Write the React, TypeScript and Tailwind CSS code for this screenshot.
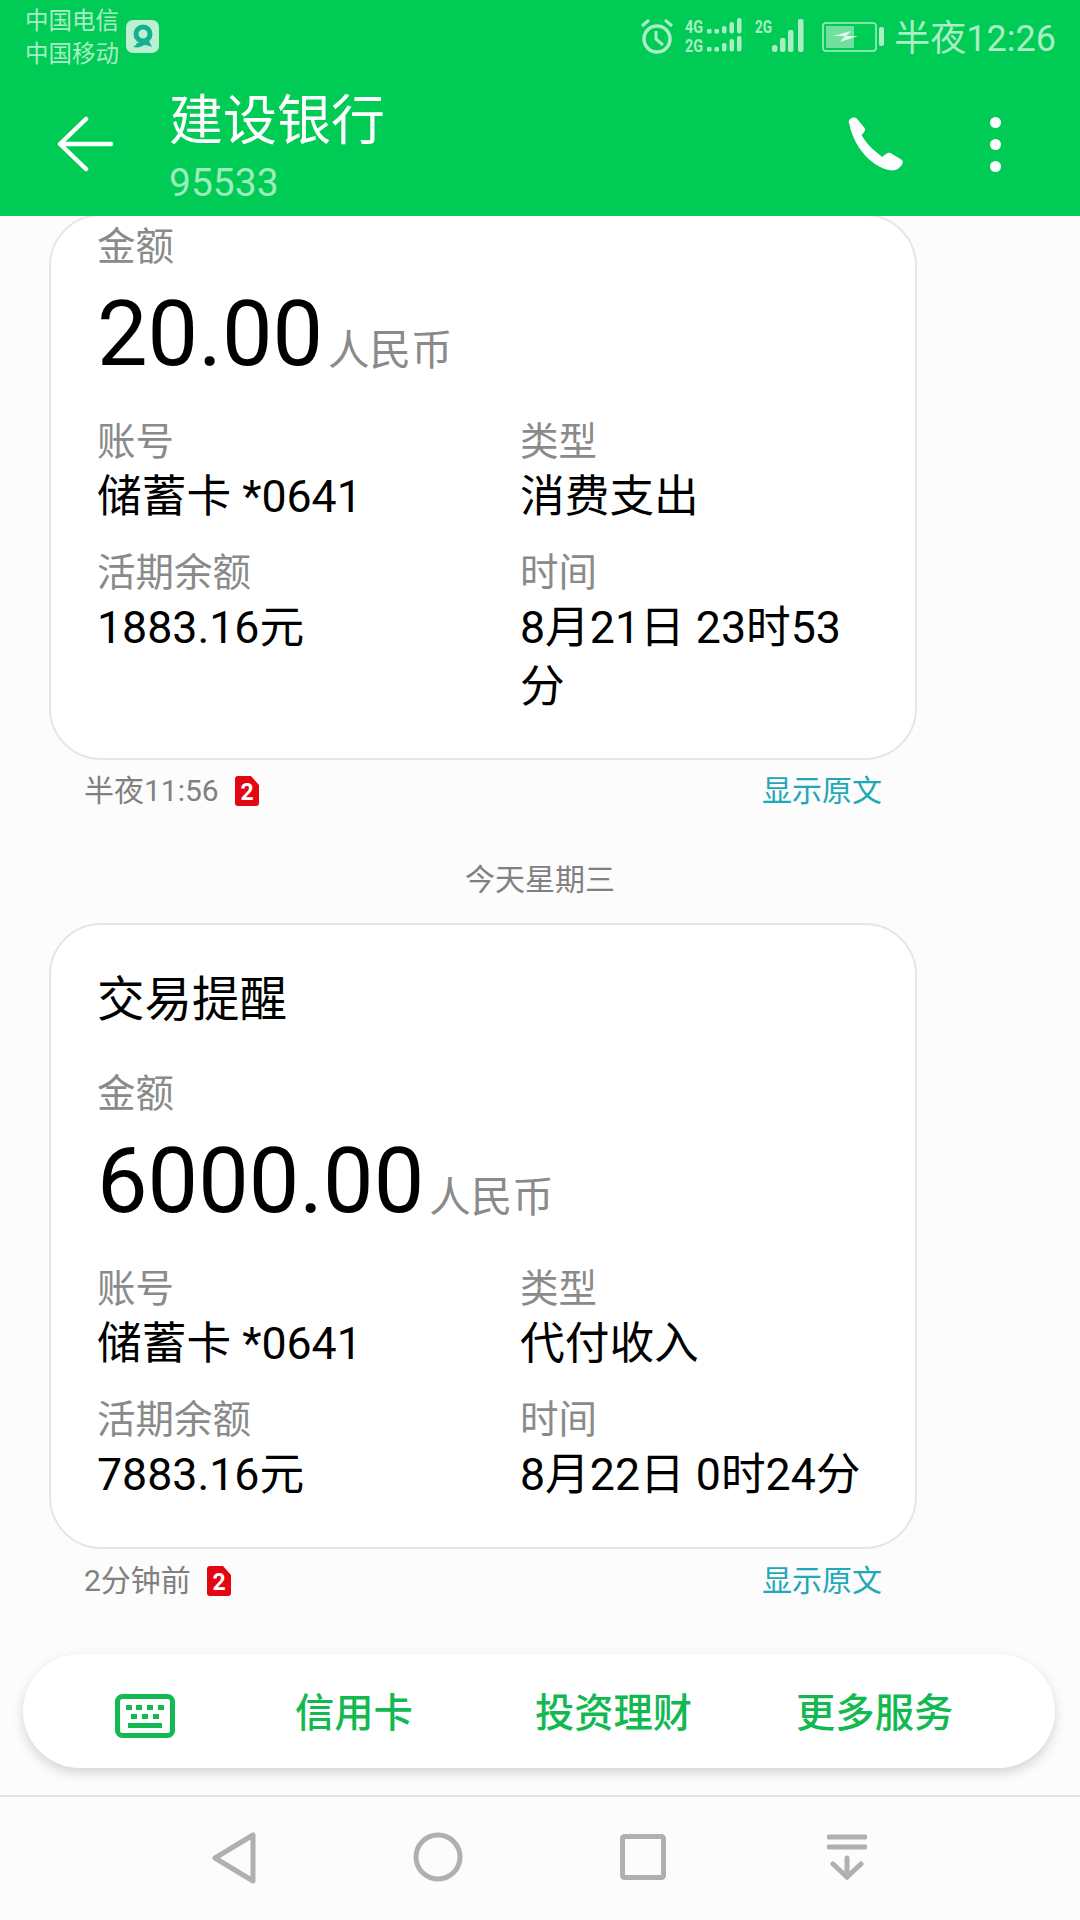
import React from 'react';

const cjk = "font-['Roboto','Noto_Sans_CJK_SC',sans-serif]";

interface Tx {
  title?: string;
  amount: string;
  kind: string;
  balance: string;
  time: string;
}

const StatusIcons = () => (
  <svg width="244" height="40" viewBox="0 0 244 40" fill="#a9eec5">
    <circle cx="16" cy="21" r="13" fill="none" stroke="#a9eec5" strokeWidth="3.5" />
    <path d="M15 13v8l7 6" fill="none" stroke="#a9eec5" strokeWidth="3" />
    <path d="M1 8l7-6M31 8l-7-6" fill="none" stroke="#a9eec5" strokeWidth="3" />
    <text x="44" y="15" fontSize="19" fontWeight="700" fontFamily="Roboto" textLength="18" lengthAdjust="spacingAndGlyphs">4G</text>
    <text x="44" y="34" fontSize="19" fontWeight="700" fontFamily="Roboto" textLength="18" lengthAdjust="spacingAndGlyphs">2G</text>
    <rect x="66" y="11" width="4.5" height="4.5" rx="1" />
    <rect x="73.5" y="11" width="4.5" height="4.5" rx="1" />
    <rect x="81" y="8" width="4.5" height="7.5" rx="2" />
    <rect x="88.5" y="4" width="4.5" height="11.5" rx="2" />
    <rect x="96" y="0" width="4.5" height="15.5" rx="2" />
    <rect x="66" y="29" width="4.5" height="4.5" rx="1" />
    <rect x="73.5" y="29" width="4.5" height="4.5" rx="1" />
    <rect x="81" y="25" width="4.5" height="8.5" rx="2" />
    <rect x="88.5" y="21" width="4.5" height="12.5" rx="2" />
    <rect x="96" y="18" width="4.5" height="15.5" rx="2" />
    <text x="114" y="15" fontSize="19" fontWeight="700" fontFamily="Roboto" textLength="17" lengthAdjust="spacingAndGlyphs">2G</text>
    <rect x="131" y="27" width="5.5" height="7" rx="2.5" />
    <rect x="139" y="20" width="5.5" height="14" rx="2" />
    <rect x="147" y="12" width="5.5" height="22" rx="2" />
    <rect x="157" y="1" width="5.5" height="33" rx="2" />
    <rect x="182" y="5" width="53" height="28" rx="3" fill="none" stroke="#a9eec5" strokeWidth="1.5" />
    <rect x="185" y="8" width="28" height="22" fill="#6fe09e" />
    <path d="M192 18l18-5-5 5h12l-18 6 5-6z" fill="#e2f9ea" />
    <rect x="238" y="9" width="5" height="19" rx="2" />
  </svg>
);

const Header = () => (
  <header className="h-[216px] shrink-0 bg-[#00cb55] relative flex flex-col">
    <div className="h-[70px] flex pl-[25px] pt-[5px]">
      <div className="text-[23.5px] leading-[33px] text-[#a9eec5] w-[101px]">
        <div>中国电信</div>
        <div>中国移动</div>
      </div>
      <div className="mt-[15px] w-[33px] h-[33px] rounded-[7px] bg-[#bdf0d3] flex items-center justify-center">
        <svg width="27" height="27" viewBox="0 0 27 27" fill="none">
          <circle cx="14" cy="11" r="7" stroke="#0fb38f" strokeWidth="5" />
          <path d="M8 20c-1 2-2 3-4 4 5 1 8 0 11-2 3 0 6 1 8 2l-3-6z" fill="#0fb38f" />
        </svg>
      </div>
      <div className="ml-auto flex items-start pr-[24px] pt-[13px]">
        <StatusIcons />
        <span className="ml-[9px] text-[36px] leading-[40px] text-[#a9eec5] mt-[1px]">半夜12:26</span>
      </div>
    </div>
    <div className="flex flex-1 items-start">
      <svg className="ml-[56px] mt-[46px]" width="58" height="56" viewBox="0 0 58 56" fill="none" stroke="#fff" strokeWidth="4.5" strokeLinecap="round" strokeLinejoin="round">
        <path d="M4 28h51M30 3L4 28l26 25" />
      </svg>
      <div className="ml-[55px] mt-[20px]">
        <div className="text-[54px] leading-[64px] text-white">建设银行</div>
        <div className="text-[39px] leading-[44px] text-[#9bedbd] mt-[7px]">95533</div>
      </div>
      <svg className="ml-auto mt-[47px]" width="56" height="54" viewBox="0 0 54 54" fill="#fff" preserveAspectRatio="none">
        <path d="M2 6C0 3 6-1 9 1l8 10c1 2 0 4-3 7 6 11 13 16 20 22 3-3 6-5 8-4l11 7c2 2 0 6-4 9-5 3-13 1-22-5C14 38 5 22 2 6z" />
      </svg>
      <div className="ml-[87px] mr-[79px] mt-[47px] flex flex-col gap-[11px]">
        <span className="w-[11px] h-[11px] rounded-full bg-white" />
        <span className="w-[11px] h-[11px] rounded-full bg-white" />
        <span className="w-[11px] h-[11px] rounded-full bg-white" />
      </div>
    </div>
  </header>
);

const Card = ({ tx, className }: { tx: Tx; className: string }) => (
  <div className={`w-[868px] ml-[49px] bg-white border-2 border-[#e6e6e6] rounded-[52px] pl-[46px] pr-[45px] ${className}`}>
    {tx.title && <div className="text-[47.5px] leading-[60px] text-black mb-[40px] mt-[45px]">{tx.title}</div>}
    <div className="text-[38.5px] leading-[48px] text-[#8a8a8a]">金额</div>
    <div className="flex items-baseline h-[100px] leading-[100px] mt-[14px]">
      <span className="text-[90px] text-black">{tx.amount}</span>
      <span className="text-[41.5px] text-[#8a8a8a] ml-[5px]">人民币</span>
    </div>
    <div className="grid grid-cols-[423px_1fr] mt-[33px]">
      <div>
        <div className="text-[38.5px] leading-[48px] text-[#8a8a8a]">账号</div>
        <div className="text-[44.7px] leading-[59px] text-black mt-[2px]">储蓄卡 *0641</div>
      </div>
      <div>
        <div className="text-[38.5px] leading-[48px] text-[#8a8a8a]">类型</div>
        <div className="text-[44.7px] leading-[59px] text-black mt-[2px]">{tx.kind}</div>
      </div>
      <div className="mt-[22px]">
        <div className="text-[38.5px] leading-[48px] text-[#8a8a8a]">活期余额</div>
        <div className="text-[44.7px] leading-[59px] text-black mt-[2px]">{tx.balance}</div>
      </div>
      <div className="mt-[22px]">
        <div className="text-[38.5px] leading-[48px] text-[#8a8a8a]">时间</div>
        <div className="text-[44.7px] leading-[59px] text-black mt-[2px]">{tx.time}</div>
      </div>
    </div>
  </div>
);

const Meta = ({ time }: { time: string }) => (
  <div className="h-[40px] flex items-center pl-[84px] pr-[198px] text-[30px] leading-[40px]">
    <span className="text-[#808080]">{time}</span>
    <svg className="ml-[16px]" width="24" height="30" viewBox="0 0 24 30">
      <path d="M3 0h13l8 9v18a3 3 0 0 1-3 3H3a3 3 0 0 1-3-3V3a3 3 0 0 1 3-3z" fill="#e30613" />
      <text x="12" y="24" textAnchor="middle" fontSize="23" fontWeight="700" fontFamily="Roboto" fill="#fff">2</text>
    </svg>
    <span className="ml-auto text-[#1fa8b8]">显示原文</span>
  </div>
);

const ActionPill = () => (
  <div className="ml-[23px] mr-[25px] h-[114px] rounded-[57px] bg-white shadow-[0_5px_12px_rgba(0,0,0,0.16)] flex items-center pl-[92px] pt-[7px] text-[39.3px] font-medium text-[#12b950]">
    <svg width="60" height="44" viewBox="0 0 60 44" fill="#12b950" className="mt-[2px]">
      <rect x="2.5" y="2.5" width="55" height="39" rx="5" fill="none" stroke="#12b950" strokeWidth="5" />
      <rect x="11" y="11" width="6" height="5" />
      <rect x="21" y="11" width="6" height="5" />
      <rect x="32" y="11" width="6" height="5" />
      <rect x="43" y="11" width="6" height="5" />
      <rect x="16" y="20" width="6" height="5" />
      <rect x="27" y="20" width="6" height="5" />
      <rect x="38" y="20" width="6" height="5" />
      <rect x="13" y="29" width="34" height="5" />
    </svg>
    <span className="ml-[120px]">信用卡</span>
    <span className="ml-[122px]">投资理财</span>
    <span className="ml-[104px]">更多服务</span>
  </div>
);

const NavBar = () => (
  <nav className="h-[125px] shrink-0 border-t-2 border-[#e4e4e4] flex items-start pt-[35px] pl-[212px]">
    <svg width="44" height="52" viewBox="0 0 44 52" fill="none" stroke="#b0b0b0" strokeWidth="5" strokeLinejoin="round">
      <path d="M3 26L41 3v46z" />
    </svg>
    <svg className="ml-[157px]" width="50" height="50" viewBox="0 0 50 50" fill="none" stroke="#b0b0b0" strokeWidth="5">
      <circle cx="25" cy="25" r="22" />
    </svg>
    <svg className="ml-[157px] mt-[2px]" width="46" height="46" viewBox="0 0 46 46" fill="none" stroke="#b0b0b0" strokeWidth="5" strokeLinejoin="round">
      <rect x="2.5" y="2.5" width="41" height="41" rx="2" />
    </svg>
    <svg className="ml-[161px] mt-[2px]" width="40" height="46" viewBox="0 0 40 46" fill="none" stroke="#b0b0b0" strokeWidth="5" strokeLinecap="round">
      <path d="M2 3h36M2 13h36M20 24v19M6 30l14 13 14-13" />
    </svg>
  </nav>
);

export default function App() {
  return (
    <div className={`w-[1080px] h-[1920px] flex flex-col overflow-hidden bg-[#fcfcfc] ${cjk}`}>
      <Header />
      <main className="flex-1 min-h-0 overflow-hidden">
        <Card
          className="-mt-[2px] pt-[7px] pb-[41px]"
          tx={{ amount: '20.00', kind: '消费支出', balance: '1883.16元', time: '8月21日 23时53分' }}
        />
        <div className="mt-[11px]"><Meta time="半夜11:56" /></div>
        <div className="text-center text-[30px] leading-[40px] text-[#808080] mt-[49px]">今天星期三</div>
        <Card
          className="mt-[23px] pb-[42px]"
          tx={{ title: '交易提醒', amount: '6000.00', kind: '代付收入', balance: '7883.16元', time: '8月22日 0时24分' }}
        />
        <div className="mt-[12px]"><Meta time="2分钟前" /></div>
        <div className="mt-[53px]"><ActionPill /></div>
      </main>
      <NavBar />
    </div>
  );
}
